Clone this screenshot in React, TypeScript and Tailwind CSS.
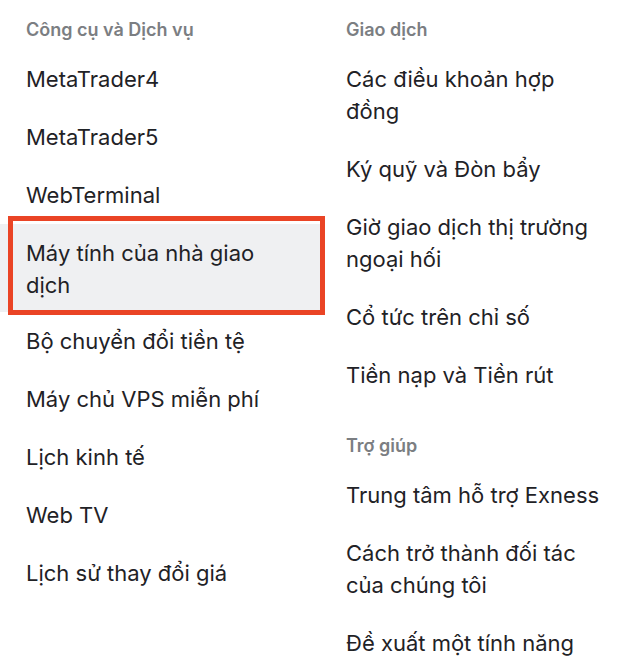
const tools = [
  "MetaTrader4",
  "MetaTrader5",
  "WebTerminal",
  "Máy tính của nhà giao dịch",
  "Bộ chuyển đổi tiền tệ",
  "Máy chủ VPS miễn phí",
  "Lịch kinh tế",
  "Web TV",
  "Lịch sử thay đổi giá",
];

const trading = [
  "Các điều khoản hợp đồng",
  "Ký quỹ và Đòn bẩy",
  "Giờ giao dịch thị trường ngoại hối",
  "Cổ tức trên chỉ số",
  "Tiền nạp và Tiền rút",
];

const help = [
  "Trung tâm hỗ trợ Exness",
  "Cách trở thành đối tác của chúng tôi",
  "Đề xuất một tính năng",
];

const SectionTitle = ({ children }: { children: string }) => (
  <h3 className="px-[26px] pt-[17px] pb-[7px] text-[18px] leading-[26px] font-semibold text-[#7b7e82]">
    {children}
  </h3>
);

const Item = ({ label, active }: { label: string; active?: boolean }) => (
  <li className="relative">
    <a
      href="#"
      className={
        "block pl-[26px] pr-[30px] text-[22px] leading-[32px] text-[#1f2226] " +
        (active ? "pt-[13px] pb-[11px] bg-[#eff0f2]" : "py-[13px]")
      }
    >
      <span className="block max-w-[262px]">{label}</span>
    </a>
    {/* focus ring around the hovered entry */}
    {active && (
      <span className="pointer-events-none absolute left-[8px] right-[-5px] top-[-8px] bottom-[-3px] border-[5px] border-[#ea4425]" />
    )}
  </li>
);

export default function App() {
  return (
    <div
      className="w-[640px] h-[670px] bg-white overflow-hidden"
      style={{ fontFamily: "Inter, 'Noto Sans', sans-serif" }}
    >
      <div className="grid grid-cols-[320px_320px]">
        <div>
          <SectionTitle>Công cụ và Dịch vụ</SectionTitle>
          <ul>
            {tools.map((t) => (
              <Item key={t} label={t} active={t === "Máy tính của nhà giao dịch"} />
            ))}
          </ul>
        </div>
        <div>
          <SectionTitle>Giao dịch</SectionTitle>
          <ul>
            {trading.map((t) => (
              <Item key={t} label={t} />
            ))}
          </ul>
          <div className="pt-[12px]">
            <SectionTitle>Trợ giúp</SectionTitle>
          </div>
          <ul>
            {help.map((t) => (
              <Item key={t} label={t} />
            ))}
          </ul>
        </div>
      </div>
    </div>
  );
}
